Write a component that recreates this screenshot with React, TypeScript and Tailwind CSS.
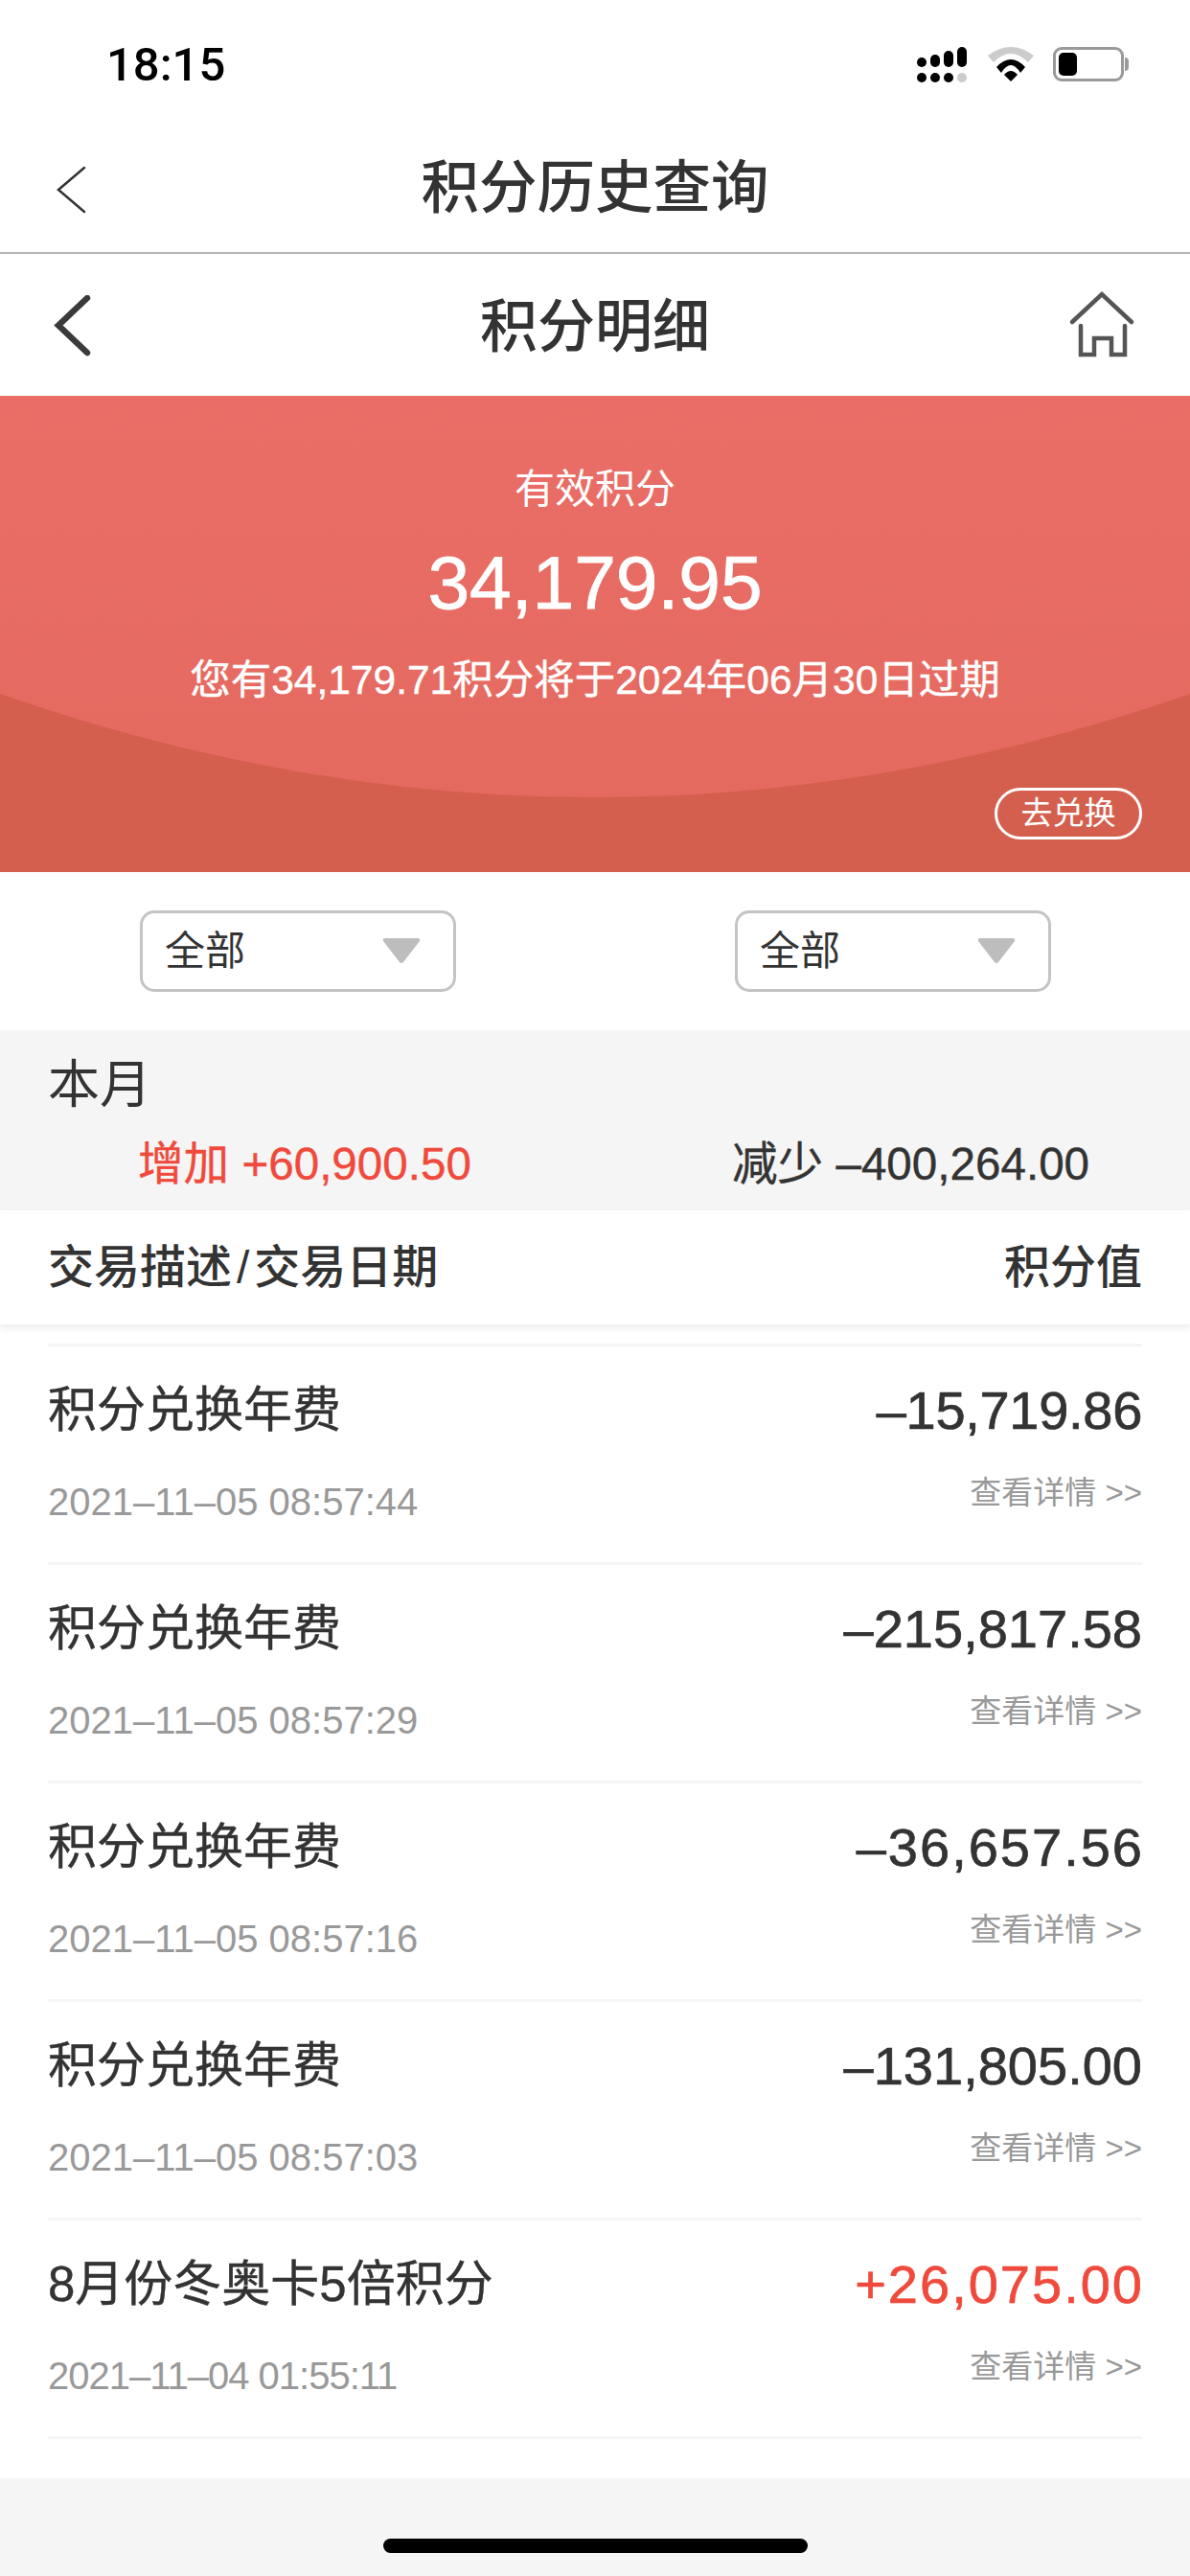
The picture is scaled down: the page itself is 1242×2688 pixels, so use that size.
import React from "react";

const sans = { fontFamily: '"Liberation Sans", "Noto Sans CJK SC", sans-serif' };
const roboto = { fontFamily: 'Roboto, "Noto Sans CJK SC", sans-serif' };

const rows = [
  { t: "积分兑换年费", d: "2021–11–05 08:57:44", v: "–15,719.86", vc: "tracking-[-0.3px]", dc: "" },
  { t: "积分兑换年费", d: "2021–11–05 08:57:29", v: "–215,817.58", vc: "", dc: "" },
  { t: "积分兑换年费", d: "2021–11–05 08:57:16", v: "–36,657.56", vc: "tracking-[2px] -mr-[2px]", dc: "" },
  { t: "积分兑换年费", d: "2021–11–05 08:57:03", v: "–131,805.00", vc: "", dc: "" },
  { t: "8月份冬奥卡5倍积分", d: "2021–11–04 01:55:11", v: "+26,075.00", vc: "tracking-[2px] -mr-[2px] text-[#ef4a3c]", dc: "tracking-[-1px]" },
];

function Signal() {
  return (
    <svg width="52" height="37" viewBox="0 0 52 37">
      <g fill="#000">
        <rect x="0" y="11" width="10" height="10" rx="5" />
        <rect x="14" y="8" width="10" height="13" rx="5" />
        <rect x="28" y="4" width="10" height="17" rx="5" />
        <rect x="42" y="0" width="10" height="21" rx="5" />
        <rect x="0" y="27" width="10" height="10" rx="5" />
        <rect x="14" y="27" width="10" height="10" rx="5" />
        <rect x="28" y="27" width="10" height="10" rx="5" />
        <rect x="42" y="27" width="10" height="10" rx="5" fill="#ccc" />
      </g>
    </svg>
  );
}

function Wifi() {
  return (
    <svg width="48" height="36" viewBox="0 0 48 36">
      <path d="M0 9 Q24 -9 48 9 L42 16 Q24 -2 6 16 Z" fill="#ccc" />
      <path d="M9 21 Q24 5 39 21 L34 27 Q24 11 14 27 Z" fill="#000" />
      <path d="M17 29 Q24 21 31 29 L24 36 Z" fill="#000" />
    </svg>
  );
}

function Battery() {
  return (
    <div className="flex items-center">
      <div className="w-[74px] h-[36px] border-[3px] border-[#9a9a9a] rounded-[9px] p-[3px]">
        <div className="w-[19px] h-full bg-black rounded-[5px]" />
      </div>
      <div className="w-[4px] h-[14px] bg-[#9a9a9a] rounded-r-[4px] ml-[1px]" />
    </div>
  );
}

function Select() {
  return (
    <div className="w-[330px] h-[85px] border-[3px] border-[#c4c4c4] rounded-[15px] flex items-center justify-between pl-[23px] pr-[34px] text-[42px] text-[#333]">
      <span>全部</span>
      <svg width="40" height="27" viewBox="0 0 40 27">
        <path d="M3 0 H37 Q40 0 39 3 L22 25 Q20 27 18 25 L1 3 Q0 0 3 0 Z" fill="#bdbdbd" />
      </svg>
    </div>
  );
}

export default function App() {
  return (
    <div className="w-[1242px] h-[2688px] bg-white flex flex-col overflow-hidden text-[#333]" style={sans}>
      <div className="h-[130px] shrink-0 flex items-start justify-between pt-[49px] pl-[111px] pr-[64px]">
        <span className="text-[49px] leading-[37px] font-medium text-black" style={roboto}>18:15</span>
        <div className="flex items-start">
          <Signal />
          <div className="ml-[22px]">
            <Wifi />
          </div>
          <div className="ml-[20px]">
            <Battery />
          </div>
        </div>
      </div>

      <div className="relative h-[135px] shrink-0 flex items-center justify-center border-b-[2px] border-[#b4b4b4]">
        <svg className="absolute left-[58px] top-[43px]" width="32" height="50" viewBox="0 0 32 50">
          <path d="M30 2 L3 25 L30 48" fill="none" stroke="#333" strokeWidth="2.5" strokeLinecap="round" />
        </svg>
        <span className="text-[60.5px] font-medium leading-none">积分历史查询</span>
      </div>

      <div className="relative h-[148px] shrink-0 flex items-center justify-center pt-[5px]">
        <svg className="absolute left-[56px] top-[43px]" width="42" height="66" viewBox="0 0 42 66">
          <path d="M35 3 L5 31.5 L35 60" fill="none" stroke="#3a3a3a" strokeWidth="6.5" strokeLinecap="round" />
        </svg>
        <svg className="absolute left-[1115px] top-[35px]" width="72" height="75" viewBox="0 0 72 75">
          <path d="M4 36 L35 7 L66 36" fill="none" stroke="#555" strokeWidth="4.5" strokeLinecap="round" />
          <path d="M13 40 V70 H27 V53 H45 V70 H59 V40" fill="none" stroke="#555" strokeWidth="4.5" strokeLinecap="round" />
        </svg>
        <span className="text-[60px] font-medium leading-none">积分明细</span>
      </div>

      <div className="relative h-[497px] shrink-0 bg-[#d45f4e] text-white flex flex-col items-center overflow-hidden">
        <svg className="absolute inset-0" width="1242" height="497" viewBox="0 0 1242 497">
          <defs>
            <linearGradient id="hero" x1="0" y1="0" x2="0" y2="1">
              <stop offset="0" stopColor="#ea6e67" />
              <stop offset="1" stopColor="#e4695f" />
            </linearGradient>
          </defs>
          <path d="M0 0 H1242 V311 Q621 527 0 311 Z" fill="url(#hero)" />
        </svg>
        <div className="relative flex flex-col items-center">
          <span className="mt-[73px] text-[42px] leading-[50px]">有效积分</span>
          <span className="mt-[27px] text-[78.5px] leading-[90px] [-webkit-text-stroke-width:0.8px]">34,179.95</span>
          <span className="mt-[32px] text-[42.5px] leading-[50px] [-webkit-text-stroke-width:0.4px]">您有34,179.71积分将于2024年06月30日过期</span>
        </div>
        <div className="absolute right-[50px] top-[409px] w-[154px] h-[54px] border-[3px] border-white rounded-full flex items-center justify-center text-[33px]">
          去兑换
        </div>
      </div>

      <div className="h-[165px] shrink-0 flex items-center pl-[146px] pr-[145px] justify-between">
        <Select />
        <Select />
      </div>

      <div className="h-[188px] shrink-0 bg-[#f5f5f5] px-[50px] pt-[27px]">
        <div className="text-[54px] leading-[60px]">本月</div>
        <div className="flex text-[47.6px] leading-[60px] mt-[23px] [-webkit-text-stroke-width:0.4px]">
          <span className="ml-[94px] w-[620px] text-[#ef4a3c]">增加 +60,900.50</span>
          <span>减少 –400,264.00</span>
        </div>
      </div>

      <div className="relative z-10 h-[119px] shrink-0 bg-white px-[50px] flex items-center justify-between text-[48px] font-medium shadow-[0_4px_8px_rgba(0,0,0,0.08)]">
        <span>交易描述<span className="mx-[5px]">/</span>交易日期</span>
        <span>积分值</span>
      </div>

      <div className="mt-[20px] mx-[50px] border-t-[3px] border-[#f5f5f5]">
        {rows.map((r) => (
          <div key={r.d} className="h-[228px] border-b-[3px] border-[#f5f5f5] flex justify-between">
            <div className="flex flex-col">
              <span className="mt-[35px] text-[51px] leading-[64px] [-webkit-text-stroke-width:0.4px]">{r.t}</span>
              <span className={`mt-[40px] text-[40px] leading-[46px] text-[#999] ${r.dc}`}>{r.d}</span>
            </div>
            <div className="flex flex-col items-end">
              <span className={`mt-[35px] text-[56px] leading-[64px] [-webkit-text-stroke-width:0.7px] ${r.vc}`}>{r.v}</span>
              <span className="mt-[31px] text-[33px] leading-[46px] text-[#999]">查看详情 &gt;&gt;</span>
            </div>
          </div>
        ))}
      </div>

      <div className="mt-auto h-[102px] shrink-0 bg-[#f5f5f5] flex justify-center pt-[63px]">
        <div className="w-[443px] h-[15px] bg-black rounded-full" />
      </div>
    </div>
  );
}
